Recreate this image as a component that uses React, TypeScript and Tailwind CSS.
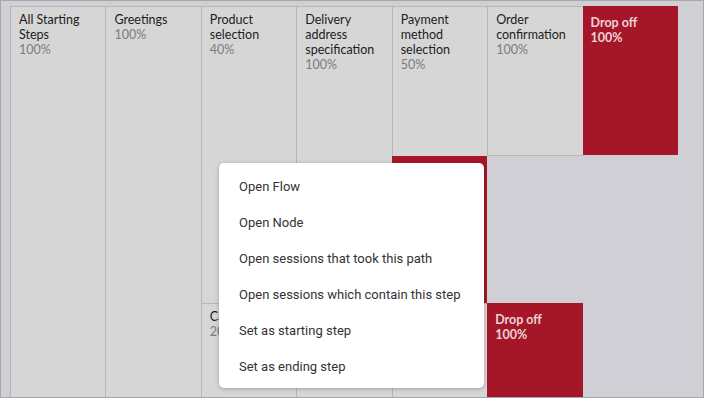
import React from "react";

type Cell = {
  h: string;
  title?: string;
  pct?: string;
  kind: "grey" | "red" | "empty";
  bottom?: boolean;
};

const cols: Cell[][] = [
  [{ h: "h-[391px]", title: "All Starting Steps", pct: "100%", kind: "grey" }],
  [{ h: "h-[391px]", title: "Greetings", pct: "100%", kind: "grey" }],
  [
    { h: "h-[297px]", title: "Product selection", pct: "40%", kind: "grey" },
    { h: "h-[94px]", title: "Cart review", pct: "20%", kind: "grey" },
  ],
  [
    { h: "h-[297px]", title: "Delivery address specification", pct: "100%", kind: "grey" },
    { h: "h-[94px]", kind: "grey" },
  ],
  [
    { h: "h-[150px]", title: "Payment method selection", pct: "50%", kind: "grey" },
    { h: "h-[147px]", title: "Drop off", pct: "100%", kind: "red" },
    { h: "h-[94px]", kind: "grey" },
  ],
  [
    { h: "h-[150px]", title: "Order confirmation", pct: "100%", kind: "grey", bottom: true },
    { h: "h-[147px]", kind: "empty" },
    { h: "h-[94px]", title: "Drop off", pct: "100%", kind: "red" },
  ],
  [{ h: "h-[149px]", title: "Drop off", pct: "100%", kind: "red" }],
];

const menuItems = [
  "Open Flow",
  "Open Node",
  "Open sessions that took this path",
  "Open sessions which contain this step",
  "Set as starting step",
  "Set as ending step",
];

function CellView({ c }: { c: Cell }) {
  if (c.kind === "empty") return <div className={c.h} />;
  if (c.kind === "red") {
    return (
      <div
        className={
          "bg-[#a51728] px-2 pt-[9px] text-[12.5px] leading-[15px] font-bold text-[#ecd3d8] " + c.h
        }
      >
        <div>{c.title}</div>
        <div>{c.pct}</div>
      </div>
    );
  }
  return (
    <div
      className={
        "bg-[#d6d6d6] border-l border-t border-[#b6b6b6] pl-2 pr-1 pt-[5px] text-[12.5px] leading-[15px] " +
        c.h +
        (c.bottom ? " border-b" : "")
      }
    >
      {c.title && <div className="text-[#1c1c1c]">{c.title}</div>}
      {c.pct && <div className="text-[#7c7c7c]">{c.pct}</div>}
    </div>
  );
}

export default function App() {
  return (
    <div className="relative w-[704px] h-[398px] overflow-hidden border border-[#a8a8a8] bg-[#d0cfd5] pt-[5px] pl-[9px] font-['Lato','Noto_Sans',sans-serif]">
      <div className="grid grid-cols-7 w-[668px]">
        {cols.map((col, i) => (
          <div key={i} className="flex flex-col">
            {col.map((c, j) => (
              <CellView key={j} c={c} />
            ))}
          </div>
        ))}
      </div>
      <div className="absolute left-[218px] top-[162px] w-[265px] rounded-[5px] bg-white pt-[6px] pb-[3px] shadow-[0_1px_4px_rgba(0,0,0,0.25)] font-['Roboto','Noto_Sans',sans-serif]">
        {menuItems.map((m) => (
          <div key={m} className="flex h-[36px] items-center pl-[20px] text-[13px] text-[#333333]">
            {m}
          </div>
        ))}
      </div>
    </div>
  );
}
